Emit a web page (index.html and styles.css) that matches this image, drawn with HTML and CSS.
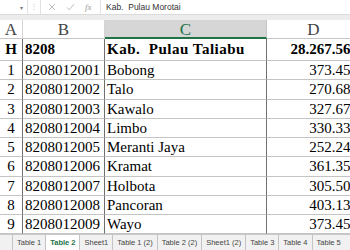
FILE: index.html
```html
<!DOCTYPE html>
<html lang="en">
<head>
<title>Sheet</title>
<link rel="stylesheet" href="styles.css">
</head>
<body>

<div class="formula-bar">
    <div class="name-box"><span class="arrow">&#9662;</span></div>
    <div class="dots">&#8942;</div>
    <div class="fx-box">
        <svg class="icon" width="8" height="8" viewBox="0 0 8 8"><path d="M1 1L7 7M7 1L1 7" stroke="#b4b4b4" stroke-width="0.9" fill="none"/></svg>
        <svg class="icon" width="9" height="8" viewBox="0 0 9 8"><path d="M1 4.5L3.3 6.8L8 1.2" stroke="#b4b4b4" stroke-width="0.9" fill="none"/></svg>
        <span class="fx">fx</span>
    </div>
    <div class="input">Kab.&nbsp; Pulau Morotai</div>
</div>
<div class="band"></div>

<div class="sheet">
    <div class="row head">
        <div class="cell">A</div>
        <div class="cell">B</div>
        <div class="cell selected">C</div>
        <div class="cell">D</div>
    </div>
    <div class="row first">
        <div class="cell">H</div>
        <div class="cell">8208</div>
        <div class="cell name">Kab.&nbsp; Pulau Taliabu</div>
        <div class="cell num">28.267.563</div>
    </div>
    <div class="row"><div class="cell">1</div><div class="cell">8208012001</div><div class="cell">Bobong</div><div class="cell num">373.457</div></div>
    <div class="row"><div class="cell">2</div><div class="cell">8208012002</div><div class="cell">Talo</div><div class="cell num">270.688</div></div>
    <div class="row"><div class="cell">3</div><div class="cell">8208012003</div><div class="cell">Kawalo</div><div class="cell num">327.671</div></div>
    <div class="row"><div class="cell">4</div><div class="cell">8208012004</div><div class="cell">Limbo</div><div class="cell num">330.332</div></div>
    <div class="row"><div class="cell">5</div><div class="cell">8208012005</div><div class="cell">Meranti Jaya</div><div class="cell num">252.245</div></div>
    <div class="row"><div class="cell">6</div><div class="cell">8208012006</div><div class="cell">Kramat</div><div class="cell num">361.351</div></div>
    <div class="row"><div class="cell">7</div><div class="cell">8208012007</div><div class="cell">Holbota</div><div class="cell num">305.503</div></div>
    <div class="row"><div class="cell">8</div><div class="cell">8208012008</div><div class="cell">Pancoran</div><div class="cell num">403.134</div></div>
    <div class="row"><div class="cell">9</div><div class="cell">8208012009</div><div class="cell">Wayo</div><div class="cell num">373.452</div></div>
</div>

<div class="tabs">
    <div class="tab">Table 1</div>
    <div class="tab active">Table 2</div>
    <div class="tab">Sheet1</div>
    <div class="tab">Table 1 (2)</div>
    <div class="tab">Table 2 (2)</div>
    <div class="tab">Sheet1 (2)</div>
    <div class="tab">Table 3</div>
    <div class="tab">Table 4</div>
    <div class="tab">Table 5</div>
</div>

</body>
</html>
```

FILE: styles.css
```css
body {
    margin: 0;
    width: 350px;
    height: 250px;
    overflow: hidden;
    background-color: #fff;
    font-family: "Liberation Serif", serif;
    color: #000;
}

.formula-bar {
    height: 15px;
    display: flex;
    background-color: #fff;
    border-bottom: 1px solid #dadada;
    box-sizing: border-box;
    font-family: "Liberation Sans", sans-serif;
}
.name-box {
    width: 28px;
    box-sizing: border-box;
    border-right: 1px solid #e2e2e2;
    display: flex;
    justify-content: flex-end;
    align-items: center;
    padding-right: 4px;
}
.arrow {
    font-size: 6px;
    color: #777;
}
.dots {
    width: 12px;
    text-align: center;
    font-size: 8px;
    line-height: 14px;
    color: #c6c6c6;
}
.fx-box {
    width: 61px;
    box-sizing: border-box;
    border-left: 1px solid #e2e2e2;
    border-right: 1px solid #e2e2e2;
    display: flex;
    align-items: center;
    padding-left: 7px;
    gap: 10px;
}
.fx {
    font-family: "Liberation Serif", serif;
    font-style: italic;
    font-size: 9px;
    color: #9a9a9a;
}
.input {
    flex: 1;
    padding-left: 5px;
    font-size: 8.5px;
    line-height: 14px;
    color: #333;
    white-space: nowrap;
}
.band {
    height: 5px;
    background-color: #ececec;
}

.sheet {
    width: 361px;
}
.row {
    display: grid;
    grid-template-columns: 23px 82px 162px 94px;
    height: 19.25px;
    font-size: 15px;
    line-height: 18px;
}
.cell {
    box-sizing: border-box;
    border-right: 1px solid #707070;
    border-bottom: 1px solid #c4c4c4;
    padding: 0 2px;
    white-space: nowrap;
    overflow: hidden;
}
.row .cell:first-child {
    text-align: center;
    padding: 0;
}
.num {
    text-align: right;
}

.head {
    height: 19px;
    font-size: 17px;
    color: #444;
    background-color: #fff;
}
.head .cell {
    text-align: center;
    border-right: 1px solid #d4d4d4;
    border-bottom: 1px solid #c6c6c6;
    line-height: 19px;
}
.head .selected {
    background-color: #d6d6d6;
    color: #217346;
    border-bottom: 2px solid #217346;
    border-right: 1px solid #c6c6c6;
}

.first {
    height: 22px;
    font-weight: bold;
    line-height: 21px;
}
.first .name {
    letter-spacing: 0.5px;
}

.tabs {
    height: 16px;
    display: flex;
    align-items: stretch;
    background-color: #f1f1f1;
    border-top: 1px solid #c8c8c8;
    box-sizing: border-box;
    padding-left: 12px;
    font-family: "Liberation Sans", sans-serif;
    font-size: 7.5px;
    color: #444;
    white-space: nowrap;
}
.tab {
    padding: 0 4px;
    line-height: 15px;
    border-left: 1px solid #c4c4c4;
}
.tab.active {
    background-color: #fff;
    color: #217346;
    font-weight: bold;
}
```
